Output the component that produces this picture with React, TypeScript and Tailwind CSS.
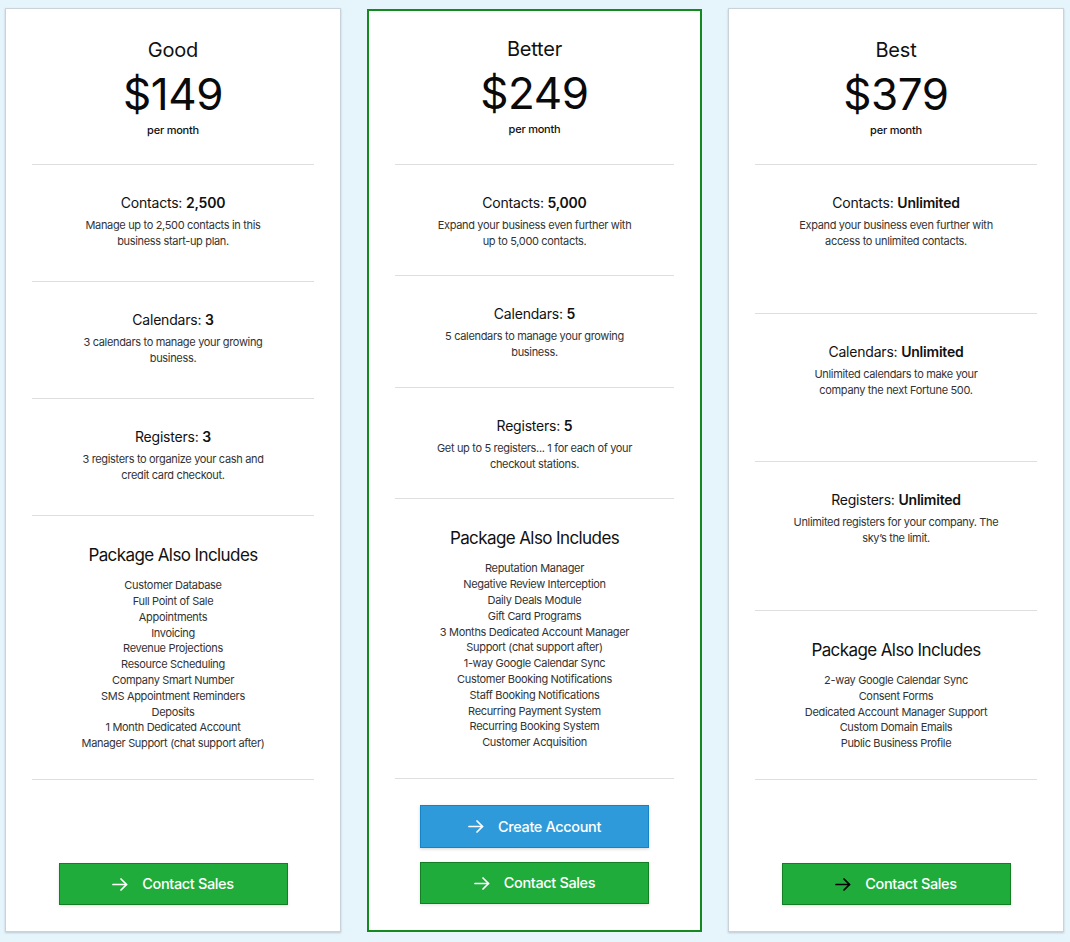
type Feature = { label: string; value: string; lines: string[] };

type Plan = {
  name: string;
  price: string;
  featured?: boolean;
  features: Feature[];
  includes: string[];
  createAccount?: boolean;
  darkArrow?: boolean;
};

const plans: Plan[] = [
  {
    name: 'Good',
    price: '$149',
    features: [
      { label: 'Contacts:', value: '2,500', lines: ['Manage up to 2,500 contacts in this', 'business start-up plan.'] },
      { label: 'Calendars:', value: '3', lines: ['3 calendars to manage your growing', 'business.'] },
      { label: 'Registers:', value: '3', lines: ['3 registers to organize your cash and', 'credit card checkout.'] },
    ],
    includes: [
      'Customer Database',
      'Full Point of Sale',
      'Appointments',
      'Invoicing',
      'Revenue Projections',
      'Resource Scheduling',
      'Company Smart Number',
      'SMS Appointment Reminders',
      'Deposits',
      '1 Month Dedicated Account',
      'Manager Support (chat support after)',
    ],
  },
  {
    name: 'Better',
    price: '$249',
    featured: true,
    createAccount: true,
    features: [
      { label: 'Contacts:', value: '5,000', lines: ['Expand your business even further with', 'up to 5,000 contacts.'] },
      { label: 'Calendars:', value: '5', lines: ['5 calendars to manage your growing', 'business.'] },
      { label: 'Registers:', value: '5', lines: ['Get up to 5 registers... 1 for each of your', 'checkout stations.'] },
    ],
    includes: [
      'Reputation Manager',
      'Negative Review Interception',
      'Daily Deals Module',
      'Gift Card Programs',
      '3 Months Dedicated Account Manager',
      'Support (chat support after)',
      '1-way Google Calendar Sync',
      'Customer Booking Notifications',
      'Staff Booking Notifications',
      'Recurring Payment System',
      'Recurring Booking System',
      'Customer Acquisition',
    ],
  },
  {
    name: 'Best',
    price: '$379',
    darkArrow: true,
    features: [
      { label: 'Contacts:', value: 'Unlimited', lines: ['Expand your business even further with', 'access to unlimited contacts.'] },
      { label: 'Calendars:', value: 'Unlimited', lines: ['Unlimited calendars to make your', 'company the next Fortune 500.'] },
      { label: 'Registers:', value: 'Unlimited', lines: ['Unlimited registers for your company. The', 'sky\u2019s the limit.'] },
    ],
    includes: [
      '2-way Google Calendar Sync',
      'Consent Forms',
      'Dedicated Account Manager Support',
      'Custom Domain Emails',
      'Public Business Profile',
    ],
  },
];

// thin arrow like the original theme's icon font
function Arrow({ dark }: { dark?: boolean }) {
  return (
    <svg
      width="16"
      height="13"
      viewBox="0 0 16 13"
      fill="none"
      stroke="currentColor"
      strokeWidth="1.7"
      strokeLinecap="round"
      strokeLinejoin="round"
      className={dark ? 'text-black' : 'text-white'}
    >
      <path d="M1 6.5h13.5" />
      <path d="M9 1l5.5 5.5L9 12" />
    </svg>
  );
}

function PlanButton({ label, blue, darkArrow }: { label: string; blue?: boolean; darkArrow?: boolean }) {
  return (
    <button
      className={
        blue
          ? 'w-[229px] h-[43px] flex items-center justify-center gap-[14px] bg-[#2e9ad9] border border-[#1583c6] text-white text-[14.5px] font-medium tracking-[-0.025em] shadow-[0_1px_3px_rgba(0,0,0,0.18)]'
          : 'w-[229px] h-[42px] flex items-center justify-center gap-[14px] bg-[#20ac3b] border border-[#137f25] text-white text-[14.5px] font-medium tracking-[-0.025em] shadow-[0_1px_3px_rgba(0,0,0,0.12)]'
      }
    >
      <Arrow dark={darkArrow} />
      <span>{label}</span>
    </button>
  );
}

function PlanCard({ plan }: { plan: Plan }) {
  return (
    <div
      className={
        plan.featured
          ? 'w-[335px] h-[923px] flex flex-col bg-white border-2 border-[#148a1e]'
          : 'w-[336px] h-[924px] flex flex-col bg-white border border-[#c9d3d9] shadow-[0_1px_2px_rgba(0,0,0,0.18)]'
      }
    >
      {/* header */}
      <div className={plan.featured ? 'h-[153px] flex flex-col items-center pt-[25px]' : 'h-[155px] flex flex-col items-center pt-[28px]'}>
        <div className="text-[20px] leading-[26px] text-[#111] tracking-[-0.01em]">{plan.name}</div>
        <div className="mt-[5px] text-[44px] leading-[52px] text-[#0a0a0a] tracking-[-0.01em]">{plan.price}</div>
        <div className="mt-[2px] text-[11px] leading-[16px] font-medium text-[#111] tracking-[-0.02em]">per month</div>
      </div>

      {/* features */}
      <div className="flex-1 flex flex-col mx-[26px]">
        {plan.features.map((f) => (
          <div key={f.label} className="flex-1 border-t border-[#dedede] pt-[28px] text-center">
            <div className="text-[14px] leading-[20px] text-[#111] tracking-[-0.015em]">
              {f.label} <span className="font-semibold">{f.value}</span>
            </div>
            <div className="mt-[4px] text-[11px] leading-[16px] text-[#333] tracking-[-0.03em]">
              {f.lines.map((l) => (
                <div key={l}>{l}</div>
              ))}
            </div>
          </div>
        ))}
        <div className="border-t border-[#dedede] pt-[27px] pb-[27px] text-center">
          <div className="text-[17px] leading-[24px] text-[#111] tracking-[-0.035em]">Package Also Includes</div>
          <div className="mt-[11px] text-[11px] leading-[15.8px] text-[#333] tracking-[-0.03em]">
            {plan.includes.map((i) => (
              <div key={i}>{i}</div>
            ))}
          </div>
        </div>
      </div>

      {/* buttons */}
      <div className="h-[152px] mx-[26px] border-t border-[#dedede] flex flex-col items-center justify-end gap-[14px] pb-[26px]">
        {plan.createAccount && <PlanButton label="Create Account" blue />}
        <PlanButton label="Contact Sales" darkArrow={plan.darkArrow} />
      </div>
    </div>
  );
}

export default function App() {
  return (
    <div className="w-[1070px] h-[942px] bg-[#e6f4fc] flex items-start gap-[26px] pl-[5px] pt-[8px] font-['Inter',_sans-serif] overflow-hidden">
      {plans.map((p) => (
        <div key={p.name} className={p.featured ? 'pt-px' : ''}>
          <PlanCard plan={p} />
        </div>
      ))}
    </div>
  );
}
